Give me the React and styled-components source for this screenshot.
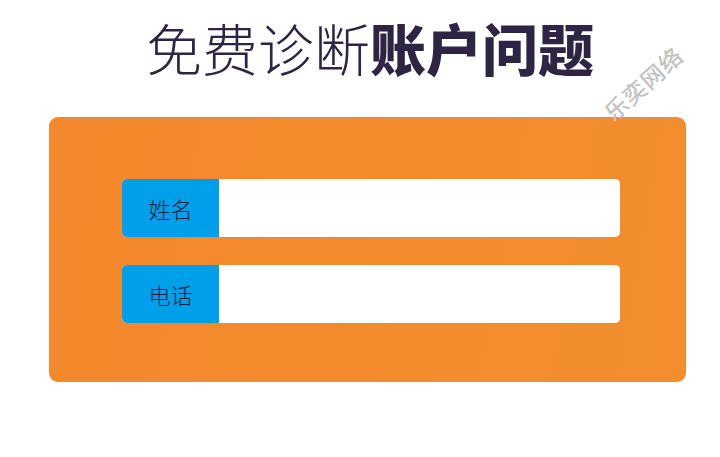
import React from "react";
import styled, { createGlobalStyle } from "styled-components";

const GlobalStyle = createGlobalStyle`
  html, body {
    margin: 0;
    padding: 0;
    background: #ffffff;
    font-family: "Noto Sans CJK SC", "Noto Sans", sans-serif;
  }
`;

const Page = styled.div`
  position: relative;
  width: 720px;
  height: 457px;
  overflow: hidden;
  background: #fff;
`;

const Title = styled.h1`
  margin: 0;
  padding-top: 14px;
  height: 117px;
  box-sizing: border-box;
  text-align: center;
  padding-left: 20px;
  font-size: 56px;
  line-height: 66px;
  font-weight: 300;
  color: #2d2543;
  letter-spacing: 0;

  b {
    font-weight: 900;
  }
`;

const Watermark = styled.div`
  position: absolute;
  left: 595px;
  top: 66px;
  transform: rotate(-42deg);
  font-size: 23px;
  font-weight: 500;
  color: #c2c2c2;
  letter-spacing: 1px;
  white-space: nowrap;
`;

const Panel = styled.form`
  margin-left: 49px;
  width: 637px;
  height: 265px;
  box-sizing: border-box;
  padding: 62px 66px 0 73px;
  border-radius: 9px;
  background: linear-gradient(100deg, #f4882c 0%, #f38c2d 60%, #f28e2e 100%);
  display: flex;
  flex-direction: column;
  gap: 28px;
`;

const Field = styled.label`
  display: flex;
  height: 58px;
  border-radius: 5px;
  overflow: hidden;
  background: #fff;
`;

const Tag = styled.span`
  width: 97px;
  flex: none;
  background: #009fe9;
  color: #16203d;
  font-size: 22px;
  display: flex;
  align-items: center;
  justify-content: center;
  font-weight: 300;
`;

const Input = styled.input`
  flex: 1;
  border: none;
  outline: none;
  padding: 0 14px;
  font-size: 18px;
  font-family: inherit;
  background: #fff;
`;

export default function App() {
  return (
    <Page>
      <GlobalStyle />
      <Title>
        免费诊断<b>账户问题</b>
      </Title>
      <Watermark>乐奕网络</Watermark>
      <Panel>
        <Field>
          <Tag>姓名</Tag>
          <Input type="text" />
        </Field>
        <Field>
          <Tag>电话</Tag>
          <Input type="tel" />
        </Field>
      </Panel>
    </Page>
  );
}
